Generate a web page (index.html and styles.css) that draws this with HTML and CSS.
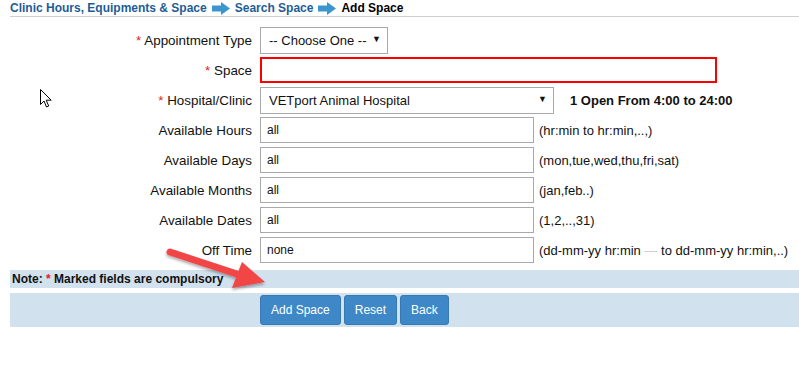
FILE: index.html
```html
<!DOCTYPE html>
<html lang="en">
<head>
  <meta charset="UTF-8">
  <title>Add Space</title>
  <link rel="stylesheet" href="styles.css">
</head>
<body>
  <div class="page">
    <div class="crumbs">
      <a href="#">Clinic Hours, Equipments &amp; Space</a>
      <svg class="crumb-arrow" width="18" height="13" viewBox="0 0 18 13"><path d="M0 3.5h9V0l9 6.5-9 6.5V9.5H0z" fill="#3b96cf"/></svg>
      <a href="#">Search Space</a>
      <svg class="crumb-arrow" width="18" height="13" viewBox="0 0 18 13"><path d="M0 3.5h9V0l9 6.5-9 6.5V9.5H0z" fill="#3b96cf"/></svg>
      <span class="current">Add Space</span>
    </div>

    <form class="form">
      <label class="lbl"><span class="req">*</span> Appointment Type</label>
      <div class="cell">
        <span class="select-wrap small">
          <select><option>-- Choose One --</option></select>
        </span>
      </div>

      <label class="lbl"><span class="req">*</span> Space</label>
      <div class="cell"><input type="text" class="field error"></div>

      <label class="lbl"><span class="req">*</span> Hospital/Clinic</label>
      <div class="cell">
        <span class="select-wrap wide">
          <select><option>VETport Animal Hospital</option></select>
        </span>
        <span class="open-info">1 Open From 4:00 to 24:00</span>
      </div>

      <label class="lbl">Available Hours</label>
      <div class="cell"><input type="text" class="field" value="all"><span class="hint">(hr:min to hr:min,..,)</span></div>

      <label class="lbl">Available Days</label>
      <div class="cell"><input type="text" class="field" value="all"><span class="hint">(mon,tue,wed,thu,fri,sat)</span></div>

      <label class="lbl">Available Months</label>
      <div class="cell"><input type="text" class="field" value="all"><span class="hint">(jan,feb..)</span></div>

      <label class="lbl">Available Dates</label>
      <div class="cell"><input type="text" class="field" value="all"><span class="hint">(1,2,..,31)</span></div>

      <label class="lbl">Off Time</label>
      <div class="cell"><input type="text" class="field" value="none"><span class="hint">(dd-mm-yy hr:min <span class="dash">&mdash;</span> to dd-mm-yy hr:min,..)</span></div>
    </form>

    <div class="note">Note: <span class="req">*</span> Marked fields are compulsory</div>

    <div class="actions">
      <button class="btn">Add Space</button>
      <button class="btn">Reset</button>
      <button class="btn">Back</button>
    </div>
  </div>

  <!-- annotation arrow drawn over the screenshot -->
  <svg class="annot" width="110" height="50" viewBox="0 0 110 50">
    <defs>
      <filter id="sh" x="-20%" y="-20%" width="140%" height="160%">
        <feDropShadow dx="0" dy="2" stdDeviation="1.5" flood-color="#000" flood-opacity="0.35"/>
      </filter>
    </defs>
    <g filter="url(#sh)" fill="#f24545">
      <line x1="8" y1="10" x2="75" y2="32" stroke="#f24545" stroke-width="7" stroke-linecap="round"/>
      <path d="M80 20 L103 40 L70 46 Z"/>
    </g>
  </svg>

  <!-- mouse pointer -->
  <svg class="cursor" width="13" height="19" viewBox="0 0 13 19">
    <path d="M0.5 0.5v15l3.5-3.5 2.5 6 2.2-1-2.5-5.8h5z" fill="#fff" stroke="#000" stroke-width="1"/>
  </svg>
</body>
</html>
```

FILE: styles.css
```css
body {
  margin: 0;
  font-family: "Liberation Sans", Arial, sans-serif;
  font-size: 13px;
  color: #111;
  background: #fff;
}
.page {
  position: relative;
}
.crumbs {
  margin-left: 10px;
  height: 16px;
  border-bottom: 1px solid #cfcfcf;
  display: flex;
  align-items: center;
  gap: 5px;
  font-size: 12px;
  font-weight: bold;
}
.crumbs a {
  color: #1d5d97;
  text-decoration: none;
}
.crumbs .current {
  color: #000;
}
.crumb-arrow {
  margin-top: 1px;
}
.form {
  display: grid;
  grid-template-columns: 260px 1fr;
  grid-auto-rows: 30px;
  margin-top: 8px;
}
.lbl {
  text-align: right;
  padding-right: 8px;
  align-self: center;
  color: #111;
  font-size: 13.4px;
}
.req {
  color: #e02222;
}
.cell {
  display: flex;
  align-items: center;
}
.field {
  box-sizing: border-box;
  width: 274px;
  height: 26px;
  border: 1px solid #a9a9a9;
  padding: 0 6px;
  font-family: inherit;
  font-size: 12px;
  color: #111;
  margin: 0;
}
.field.error {
  width: 457px;
  border: 2px solid #f00;
  outline: none;
}
.hint {
  margin-left: 5px;
  font-size: 13px;
  color: #111;
}
.hint .dash {
  color: #d0d0d0;
}
.select-wrap {
  position: relative;
  display: inline-block;
}
.select-wrap select {
  appearance: none;
  -webkit-appearance: none;
  box-sizing: border-box;
  height: 27px;
  border: 1px solid #a9a9a9;
  border-radius: 0;
  background: #fff;
  font-family: inherit;
  font-size: 13px;
  color: #111;
  padding: 0 20px 0 8px;
  margin: 0;
}
.select-wrap::after {
  content: "\25BC";
  position: absolute;
  right: 7px;
  top: 7px;
  font-size: 9px;
  color: #111;
  pointer-events: none;
}
.select-wrap.small select {
  width: 128px;
}
.select-wrap.wide select {
  width: 294px;
}
.open-info {
  margin-left: 16px;
  font-weight: bold;
  font-size: 13px;
}
.note {
  margin: 5px 0 0 10px;
  height: 18px;
  line-height: 18px;
  padding-left: 2px;
  background: #d2e1ee;
  font-size: 12px;
  font-weight: bold;
  color: #111;
}
.actions {
  margin: 5px 0 0 10px;
  height: 34px;
  background: #d2e1ee;
  display: flex;
  align-items: center;
  gap: 3px;
  padding-left: 250px;
}
.btn {
  height: 30px;
  padding: 0 10px;
  background: #3e88c8;
  border: 1px solid #3679b5;
  border-radius: 3px;
  color: #fff;
  font-family: inherit;
  font-size: 12px;
}
.annot {
  position: absolute;
  left: 162px;
  top: 242px;
}
.cursor {
  position: absolute;
  left: 40px;
  top: 89px;
}
```
